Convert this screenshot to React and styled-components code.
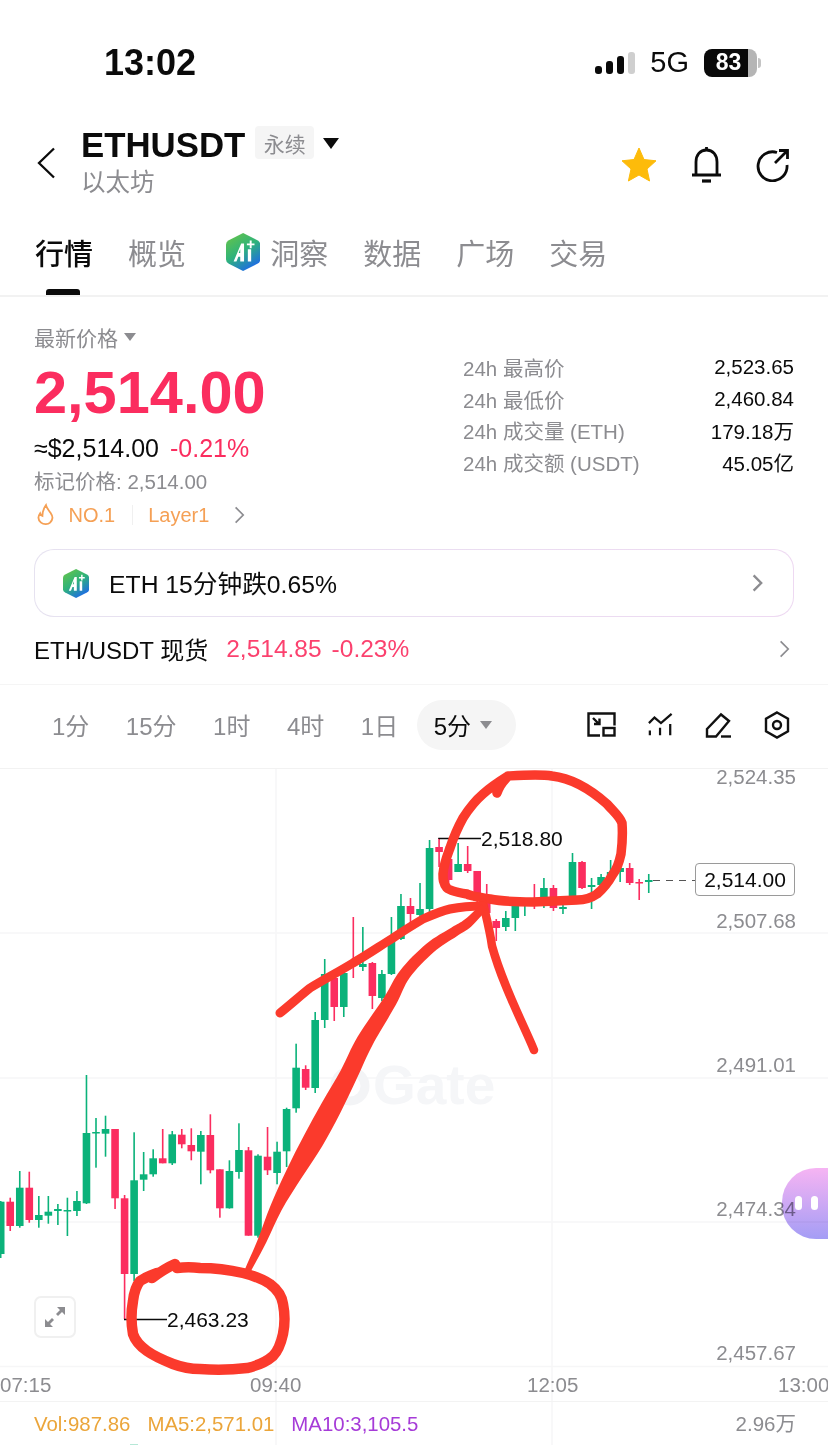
import React from "react";
import styled, { createGlobalStyle } from "styled-components";

const SANS = `"Liberation Sans", "Noto Sans CJK SC", sans-serif`;
const RED = "#fb2d5f";
const GREEN = "#0bb27a";
const GREY = "#8c8c90";
const INK_RED = "#fb3a2c";

const GlobalStyle = createGlobalStyle`
  html, body { margin: 0; padding: 0; background: #fff; }
  body { font-family: ${SANS}; color: #0b0b0b; }
  * { box-sizing: border-box; }
`;

const Page = styled.div`
  width: 828px;
  height: 1445px;
  overflow: hidden;
  position: relative;
  background: #fff;
`;

const StatusBar = styled.div`
  height: 125px;
  padding: 0 71px 0 104px;
  display: flex;
  justify-content: space-between;
  align-items: center;
`;

const Clock = styled.div`
  font-size: 36px;
  font-weight: 700;
`;

const StatusRight = styled.div`
  display: flex;
  align-items: center;
  gap: 15px;
`;

const Network = styled.span`
  font-size: 29px;
`;

const Battery = styled.div`
  width: 53px;
  height: 28px;
  border-radius: 8px;
  background: linear-gradient(90deg, #0a0a0a 83%, #b5b5b5 83%);
  color: #fff;
  font-size: 23px;
  font-weight: 700;
  display: flex;
  align-items: center;
  justify-content: center;
  padding-right: 4px;
  position: relative;
  &::after {
    content: "";
    position: absolute;
    right: -4px;
    top: 9px;
    width: 3px;
    height: 10px;
    border-radius: 0 3px 3px 0;
    background: #c4c4c4;
  }
`;

const Header = styled.div`
  height: 76px;
  padding: 0 38px 0 36px;
  display: flex;
  align-items: center;
`;

const TitleBlock = styled.div`
  margin-left: 25px;
  display: flex;
  flex-direction: column;
  flex: 1;
`;

const TitleRow = styled.div`
  display: flex;
  align-items: center;
  height: 38px;
`;

const Title = styled.span`
  font-size: 34.8px;
  font-weight: 700;
`;

const Tag = styled.span`
  margin: -5px 0 0 10px;
  width: 59px;
  height: 33px;
  border-radius: 4px;
  background: #f5f5f5;
  color: ${GREY};
  font-size: 21px;
  display: flex;
  align-items: center;
  justify-content: center;
`;

const Caret = styled.span`
  margin: -4px 0 0 9px;
  width: 0;
  height: 0;
  border-left: 8px solid transparent;
  border-right: 8px solid transparent;
  border-top: 11px solid #0b0b0b;
`;

const Subtitle = styled.span`
  font-size: 24.5px;
  line-height: 34px;
  margin-top: 2px;
  color: ${GREY};
`;

const HeaderActions = styled.div`
  display: flex;
  align-items: center;
  gap: 34px;
  margin-top: 4px;
`;

const Tabs = styled.div`
  height: 96px;
  padding: 0 0 0 35px;
  display: flex;
  align-items: center;
  gap: 35px;
  border-bottom: 2px solid #f2f2f2;
  position: relative;
`;

const Tab = styled.span`
  font-size: 29px;
  color: ${(p) => (p.$active ? "#0b0b0b" : GREY)};
  display: flex;
  align-items: center;
  gap: 10px;
  margin-top: 7px;
  margin-left: ${(p) => p.$shift || 0}px;
  font-weight: ${(p) => (p.$active ? 500 : 400)};
`;

const TabMarker = styled.span`
  position: absolute;
  left: 46px;
  bottom: 0;
  width: 34px;
  height: 6px;
  border-radius: 3px 3px 0 0;
  background: #0b0b0b;
`;

const Summary = styled.div`
  padding: 26px 34px 0;
  height: 252px;
  display: flex;
  justify-content: space-between;
`;

const PriceColumn = styled.div`
  display: flex;
  flex-direction: column;
`;

const PriceLabel = styled.div`
  font-size: 21px;
  color: ${GREY};
  display: flex;
  align-items: center;
  gap: 6px;
  height: 28px;
`;

const SmallCaret = styled.span`
  width: 0;
  height: 0;
  border-left: 6px solid transparent;
  border-right: 6px solid transparent;
  border-top: 8px solid ${GREY};
`;

const BigPrice = styled.div`
  font-size: 59.5px;
  font-weight: 700;
  color: ${RED};
  height: 72px;
  line-height: 66px;
  margin-top: 9px;
`;

const FiatRow = styled.div`
  display: flex;
  gap: 11px;
  font-size: 25px;
  height: 36px;
  align-items: center;
  margin-top: -2px;
`;

const Change = styled.span`
  color: ${RED};
`;

const MarkPrice = styled.div`
  font-size: 20.5px;
  color: ${GREY};
  height: 30px;
  display: flex;
  align-items: center;
  margin-top: -1px;
`;

const TagRow = styled.div`
  display: flex;
  align-items: center;
  font-size: 20px;
  color: #f5a055;
  height: 38px;
  gap: 8px;
  padding-left: 3px;
  margin-top: 1px;
`;

const TagDivider = styled.span`
  width: 1px;
  height: 20px;
  background: #f0f0f0;
  margin: 0 7px 0 9px;
`;

const TagArrow = styled.span`
  display: flex;
  margin-left: 17px;
`;

const StatsTable = styled.div`
  width: 331px;
  margin-top: 28px;
  display: flex;
  flex-direction: column;
`;

const StatRow = styled.div`
  height: 31.7px;
  display: flex;
  justify-content: space-between;
  align-items: center;
  font-size: 20.5px;
`;

const StatLabel = styled.span`
  color: ${GREY};
`;

const InsightCard = styled.div`
  margin: 0 34px;
  height: 68px;
  border-radius: 20px;
  padding: 0 30px 0 28px;
  display: flex;
  align-items: center;
  justify-content: space-between;
  border: 1.5px solid transparent;
  background:
    linear-gradient(#fff, #fff) padding-box,
    linear-gradient(90deg, #e6e2f0, #eed9f2) border-box;
`;

const InsightText = styled.div`
  display: flex;
  align-items: center;
  gap: 20px;
  font-size: 24.7px;
`;

const InsightLabel = styled.span`
  margin-bottom: 3px;
`;

const SpotRow = styled.div`
  height: 68px;
  padding: 0 38px 3px 34px;
  display: flex;
  align-items: center;
  font-size: 24px;
  border-bottom: 1px solid #f5f5f5;
`;

const SpotName = styled.span`
  margin: -2px 18px 0 0;
`;

const SpotChange = styled.span`
  color: ${RED};
  font-size: 24.5px;
  margin-right: 10px;
  opacity: 0.9;
`;

const Spacer = styled.span`
  flex: 1;
`;

const Toolbar = styled.div`
  height: 84px;
  padding: 0 38px 4px 52px;
  display: flex;
  align-items: center;
  border-bottom: 1px solid #f2f2f2;
`;

const Interval = styled.span`
  font-size: 24px;
  color: ${GREY};
  margin-right: 36.5px;
`;

const IntervalPill = styled.span`
  margin-left: -18px;
  width: 99px;
  height: 50px;
  border-radius: 25px;
  background: #f5f5f5;
  font-size: 24px;
  display: flex;
  align-items: center;
  padding-left: 17px;
  gap: 9px;
`;

const ToolIcons = styled.div`
  margin-left: auto;
  display: flex;
  align-items: center;
  gap: 32px;
`;

const ChartSection = styled.div`
  position: relative;
  height: 677px;
`;

const ChartLayer = styled.svg`
  position: absolute;
  inset: 0;
  width: 828px;
  height: 677px;
  overflow: visible;
  pointer-events: none;
`;

const Plot = styled.div`
  position: relative;
  height: 598px;
`;

const Watermark = styled.div`
  position: absolute;
  left: 373px;
  top: 282px;
  font-size: 55px;
  line-height: 68px;
  font-weight: 700;
  color: #f5f6f8;
`;

const YAxis = styled.div`
  position: absolute;
  top: -8px;
  right: 32px;
  display: grid;
  grid-auto-rows: 144px;
  text-align: right;
`;

const AxisLabel = styled.span`
  font-size: 20.5px;
  line-height: 32px;
  color: ${GREY};
`;

const ExtremeLabel = styled.span`
  position: absolute;
  left: ${(p) => p.$x}px;
  top: ${(p) => p.$y}px;
  font-size: 21px;
  line-height: 26px;
  color: #0b0b0b;
`;

const LastPrice = styled.span`
  position: absolute;
  left: 695px;
  top: 94px;
  width: 100px;
  height: 33px;
  border: 1px solid #9a9a9a;
  border-radius: 4px;
  font-size: 21px;
  background: #fff;
  display: flex;
  align-items: center;
  justify-content: center;
`;

const ExpandButton = styled.div`
  position: absolute;
  left: 34px;
  top: 527px;
  width: 42px;
  height: 42px;
  border: 2px solid #f0f0f0;
  border-radius: 7px;
  background: #fff;
  display: flex;
  align-items: center;
  justify-content: center;
`;

const Bubble = styled.div`
  position: absolute;
  right: 0;
  top: 399px;
  width: 46px;
  height: 71px;
  border-radius: 34px 0 0 34px;
  background: linear-gradient(180deg, #f6b4f3, #a49df5);
  mix-blend-mode: multiply;
  display: flex;
  gap: 9px;
  padding: 28px 0 0 13px;
`;

const BubbleEye = styled.span`
  width: 7px;
  height: 14px;
  border-radius: 3.5px;
  background: #fff;
`;

const TimeAxis = styled.div`
  height: 35px;
  display: grid;
  grid-template-columns: 250px 277px 251px 50px;
  align-items: center;
  padding-top: 2px;
  border-bottom: 1px solid #f3f3f3;
  position: relative;
  white-space: nowrap;
`;

const Legend = styled.div`
  height: 44px;
  padding: 0 32px 0 34px;
  display: flex;
  align-items: center;
  font-size: 20.4px;
  position: relative;
`;

const LegendItem = styled.span`
  color: ${(p) => p.$color};
  margin-right: 17px;
`;

const candles = [
  [1200, 1200.7, 1253, 1257, "g"], [1196.7, 1200.7, 1225, 1230, "r"], [1170, 1186.7, 1225, 1226.7, "g"],
  [1170.7, 1186.7, 1219, 1221.7, "r"], [1195, 1214, 1219, 1226.7, "g"], [1195, 1210.7, 1214.7, 1222.7, "g"],
  [1203, 1208, 1210, 1224, "g"], [1196.7, 1209, 1210, 1235, "g"], [1190, 1200, 1210, 1215, "g"],
  [1074, 1132, 1202.3, 1203, "g"], [1117, 1131, 1132, 1166.7, "g"], [1114.7, 1128, 1132.7, 1155.7, "g"],
  [1128, 1128, 1197.3, 1208, "r"], [1194, 1197.3, 1273, 1318, "r"], [1131.3, 1179.3, 1273, 1280, "g"],
  [1151, 1173.3, 1178.7, 1190, "g"], [1148.3, 1157.3, 1173.3, 1175.7, "g"], [1128, 1157.3, 1162.3, 1162.3, "r"],
  [1130, 1133.3, 1162.3, 1164, "g"], [1128, 1133.7, 1143.3, 1147.3, "r"], [1127.3, 1144, 1150.3, 1159.3, "r"],
  [1130, 1134, 1150.7, 1183.3, "g"], [1113.3, 1134, 1169.3, 1172.3, "r"], [1168.3, 1168.3, 1207.3, 1216.7, "r"],
  [1159.3, 1170, 1207.3, 1207.6, "g"], [1122.3, 1149, 1171, 1177.7, "g"], [1146, 1149.3, 1234.7, 1234.7, "r"],
  [1153.3, 1154.7, 1234.7, 1236.7, "g"], [1126, 1155.7, 1169.3, 1174, "r"], [1140.7, 1150.7, 1172, 1183.3, "g"],
  [1106.7, 1108, 1150.3, 1166, "g"], [1042.7, 1066.7, 1107.3, 1111.7, "g"], [1064.3, 1068, 1086.7, 1089, "r"],
  [1011, 1019, 1087, 1092, "g"], [958, 973, 1019, 1027, "g"], [973, 977, 1006, 1020, "r"],
  [967, 972, 1006, 1016, "g"], [916, 960, 962, 977, "r"], [926, 963, 966, 970, "g"],
  [961, 962, 995, 1008, "r"], [969, 973, 997, 1000, "g"], [916, 937, 973, 974, "g"],
  [893, 905, 938, 939, "g"], [897, 905, 913, 922, "r"], [882, 908, 914, 917, "g"],
  [839, 847, 908, 912, "g"], [837, 846, 851, 866, "r"], [845, 858, 879, 885, "r"],
  [842, 863, 871, 871, "g"], [845, 863, 870, 872, "r"], [870, 870, 900, 902, "r"],
  [883, 895, 912, 916, "r"], [918, 920, 927, 940, "r"], [910, 917, 926, 930, "g"],
  [900, 905, 917, 930, "g"], [897, 900, 905, 915, "g"], [883, 899, 902, 908, "r"],
  [877, 887, 897, 907, "g"], [884, 887, 907, 910, "r"], [896, 906, 908, 913, "g"],
  [852, 861, 896, 897, "g"], [860, 861, 887, 888, "r"], [877, 884, 886, 908, "g"],
  [873, 876, 884, 887, "g"], [859, 871, 875, 876, "g"], [865, 867, 871, 881, "g"],
  [862, 867, 882, 884, "r"], [878, 881, 882, 899, "r"], [873, 879, 881, 892, "g"],
];

const yLabels = ["2,524.35", "2,507.68", "2,491.01", "2,474.34", "2,457.67"];
const timeLabels = ["07:15", "09:40", "12:05", "13:00"];
const intervals = ["1分", "15分", "1时", "4时", "1日"];
const stats = [
  ["24h 最高价", "2,523.65"],
  ["24h 最低价", "2,460.84"],
  ["24h 成交量 (ETH)", "179.18万"],
  ["24h 成交额 (USDT)", "45.05亿"],
];

// centre line of the long pen stroke with its width at each point
const penStroke = [
  [484, 906, 8], [468, 922, 9.5], [454, 931, 10], [430, 947, 11], [405, 973, 12], [390, 1000, 14], [365, 1040, 17],
  [349, 1073, 18], [331, 1107, 21], [313, 1140, 21], [294, 1173, 17], [276, 1207, 12], [262, 1240, 9], [247, 1271, 6],
];

function smoothThrough(points, start) {
  let d = start ? `M${points[0][0]} ${points[0][1]}` : `L${points[0][0]} ${points[0][1]}`;
  for (let i = 0; i < points.length - 1; i++) {
    const [x0, y0] = points[Math.max(i - 1, 0)];
    const [x1, y1] = points[i];
    const [x2, y2] = points[i + 1];
    const [x3, y3] = points[Math.min(i + 2, points.length - 1)];
    d += `C${x1 + (x2 - x0) / 6} ${y1 + (y2 - y0) / 6} ${x2 - (x3 - x1) / 6} ${y2 - (y3 - y1) / 6} ${x2} ${y2}`;
  }
  return d;
}

function penOutline(line) {
  const left = [];
  const right = [];
  line.forEach(([x, y, w], i) => {
    const [ax, ay] = line[Math.max(i - 1, 0)];
    const [bx, by] = line[Math.min(i + 1, line.length - 1)];
    const len = Math.hypot(bx - ax, by - ay);
    const nx = ((by - ay) / len) * (w / 2);
    const ny = (-(bx - ax) / len) * (w / 2);
    left.push([x + nx, y + ny]);
    right.push([x - nx, y - ny]);
  });
  return `${smoothThrough(left, true)}${smoothThrough(right.reverse(), false)}Z`;
}

function Chevron({ size = 16, color = "#8c8c90", width = 2 }) {
  return (
    <svg width={size * 0.6} height={size} viewBox="0 0 10 16" fill="none" stroke={color} strokeWidth={width}>
      <path d="M1.5 1l7 7-7 7" />
    </svg>
  );
}

function AiLogo({ size = 36, id }) {
  return (
    <svg width={size * 0.9} height={size} viewBox="0 0 36 40">
      <defs>
        <linearGradient id={id} x1="0" y1="0" x2="0.6" y2="1">
          <stop offset="0" stopColor="#6cc644" />
          <stop offset="0.55" stopColor="#2fb37a" />
          <stop offset="1" stopColor="#1f6fe0" />
        </linearGradient>
      </defs>
      <path d="M18 0l15 7.5q3 1.5 3 4.5v16q0 3-3 4.5L18 40 3 32.5Q0 31 0 28V12q0-3 3-4.5z" fill={`url(#${id})`} />
      <path d="M8 30l8-19h3v19h-4v-5h-2l-2 5z M15 21v-4l-1.6 4z" fill="#fff" fillRule="evenodd" />
      <path d="M23 17h3.5v13H23z M25 8v3h-3v2h3v3h2v-3h3v-2h-3V8z" fill="#fff" />
    </svg>
  );
}

function Candles() {
  return candles.map(([high, top, bottom, low, side], i) => {
    const x = 0.7 + i * 9.53;
    const fill = side === "g" ? GREEN : RED;
    return (
      <g key={i} fill={fill}>
        <rect x={x - 0.8} y={high} width={1.6} height={low - high} />
        <rect x={x - 3.8} y={top} width={7.6} height={Math.max(bottom - top, 1.5)} />
      </g>
    );
  });
}

// hand drawn marks on top of the chart, in page coordinates
function Scribbles() {
  return (
    <ChartLayer viewBox="0 768 828 677">
      <g fill="none" stroke={INK_RED} strokeLinecap="round" strokeLinejoin="round">
        <path
          strokeWidth="9.5"
          d="M497 792C500 782 506 778 508 775C525 774 540 773 552 775C570 777 590 788 607 803C615 812 620 816 622 822C623 835 622 845 621 853C619 862 617 868 613 873C608 882 603 888 597 893C590 898 584 899 577 899L533 901C515 901 500 900 490 898C478 896 470 895 467 893C455 891 448 889 447 887C443 882 443 878 443 873C444 862 447 855 450 847C454 835 458 826 463 817C470 806 476 799 483 793C492 785 500 780 508 775"
        />
        <path strokeWidth="8.5" d="M483 902C486 915 490 930 492 945C503 985 522 1020 534 1049" />
        <path
          strokeWidth="9"
          d="M280 1012C290 1004 300 995 310 987C325 978 340 970 353 962C367 954 380 945 393 937C403 930 413 924 423 918C432 914 441 910 450 908C460 906 472 905 483 905"
        />
        <path
          strokeWidth="10.5"
          d="M152 1277C160 1271 168 1266 175 1263M177 1267C185 1266 192 1266 200 1267C215 1267 230 1269 243 1272C255 1275 264 1279 270 1283C278 1289 282 1296 283 1303C285 1313 285 1323 283 1333C281 1342 278 1350 273 1355C265 1362 256 1365 247 1367C230 1369 215 1369 200 1368C190 1368 181 1366 173 1363C163 1359 154 1355 147 1350C140 1345 135 1339 133 1333C131 1322 131 1311 133 1300C134 1291 136 1285 140 1280C146 1276 151 1274 157 1272"
        />
      </g>
      <path fill={INK_RED} d={penOutline(penStroke)} />
    </ChartLayer>
  );
}

export default function App() {
  return (
    <Page>
      <GlobalStyle />
      <StatusBar>
        <Clock>13:02</Clock>
        <StatusRight>
          <svg width="40" height="22" viewBox="0 0 40 22">
            <rect x="0" y="14" width="7" height="8" rx="3" fill="#0a0a0a" />
            <rect x="11" y="9" width="7" height="13" rx="3" fill="#0a0a0a" />
            <rect x="22" y="4" width="7" height="18" rx="3" fill="#0a0a0a" />
            <rect x="33" y="0" width="7" height="22" rx="3" fill="#cfcfcf" />
          </svg>
          <Network>5G</Network>
          <Battery>83</Battery>
        </StatusRight>
      </StatusBar>

      <Header>
        <svg width="20" height="32" viewBox="0 0 20 32" fill="none" stroke="#0b0b0b" strokeWidth="2.3">
          <path d="M18 1.5L3 16l15 14.5" />
        </svg>
        <TitleBlock>
          <TitleRow>
            <Title>ETHUSDT</Title>
            <Tag>永续</Tag>
            <Caret />
          </TitleRow>
          <Subtitle>以太坊</Subtitle>
        </TitleBlock>
        <HeaderActions>
          <svg width="36" height="36" viewBox="0 0 36 36">
            <path
              d="M18 1l5 11.5 12 1.3-9 8.2 2.6 12L18 28l-10.600 6 2.600-12-9-8.200 12-1.300z"
              fill="#fdbb0a"
              stroke="#fdbb0a"
              strokeLinejoin="round"
            />
          </svg>
          <svg width="31" height="38" viewBox="0 0 31 38" fill="none" stroke="#0b0b0b" strokeWidth="2.800">
            <path d="M1 29h29M5 29V16C5 9 9 4 15.500 4S26 9 26 16v13" />
            <path d="M15.500 1v3" />
            <path d="M11 35h9" strokeWidth="3.200" />
          </svg>
          <svg width="34" height="34" viewBox="0 0 34 34" fill="none" stroke="#0b0b0b" strokeWidth="2.800">
            <path d="M21 4.500A14.500 14.500 0 1 0 31 17" />
            <path d="M19 15L31 3M23 2.500h8.500V11" />
          </svg>
        </HeaderActions>
      </Header>

      <Tabs>
        <Tab $active>行情</Tab>
        <Tab>概览</Tab>
        <Tab $shift={5}>
          <AiLogo id="ai-tab" size={38} />
          洞察
        </Tab>
        <Tab>数据</Tab>
        <Tab>广场</Tab>
        <Tab>交易</Tab>
        <TabMarker />
      </Tabs>

      <Summary>
        <PriceColumn>
          <PriceLabel>
            最新价格
            <SmallCaret />
          </PriceLabel>
          <BigPrice>2,514.00</BigPrice>
          <FiatRow>
            <span>≈$2,514.00</span>
            <Change>-0.21%</Change>
          </FiatRow>
          <MarkPrice>标记价格: 2,514.00</MarkPrice>
          <TagRow>
            <svg width="18" height="24" viewBox="0 0 20 25" fill="none" stroke="#f5a055" strokeWidth="2">
              <path d="M10 1.500c1 4 3 5.500 5 8.500 3 4.500 3 7-.5 11-2 2-7 2.500-10 0C1 18 1 14 3.500 10.500c.5 1.500 1 2.500 2.500 3C6 9 7.500 5 10 1.500z" />
            </svg>
            <span>&nbsp;NO.1</span>
            <TagDivider />
            <span>Layer1</span>
            <TagArrow>
              <Chevron size={18} width={1.6} />
            </TagArrow>
          </TagRow>
        </PriceColumn>
        <StatsTable>
          {stats.map(([label, value]) => (
            <StatRow key={label}>
              <StatLabel>{label}</StatLabel>
              <span>{value}</span>
            </StatRow>
          ))}
        </StatsTable>
      </Summary>

      <InsightCard>
        <InsightText>
          <AiLogo id="ai-card" size={29} />
          <InsightLabel>ETH 15分钟跌0.65%</InsightLabel>
        </InsightText>
        <Chevron size={18} width={2.200} />
      </InsightCard>

      <SpotRow>
        <SpotName>ETH/USDT 现货</SpotName>
        <SpotChange>2,514.85</SpotChange>
        <SpotChange>-0.23%</SpotChange>
        <Spacer />
        <Chevron size={18} width={1.6} />
      </SpotRow>

      <Toolbar>
        {intervals.map((item) => (
          <Interval key={item}>{item}</Interval>
        ))}
        <IntervalPill>
          5分
          <SmallCaret />
        </IntervalPill>
        <ToolIcons>
          <svg width="29" height="25" viewBox="0 0 29 25" fill="none" stroke="#111" strokeWidth="2.400">
            <path d="M13 23.500H1.500v-22h26v12" />
            <path d="M6 6l6 6M7 12h5.500V6.500" />
            <rect x="16.500" y="16" width="11" height="7.500" />
          </svg>
          <svg width="25" height="25" viewBox="0 0 27 25" fill="none" stroke="#111" strokeWidth="2.400">
            <path d="M1 11l6-6 7 6L25.500 1" />
            <path d="M2 19v5M13 16v8M24 12v12" />
          </svg>
          <svg width="27" height="26" viewBox="0 0 27 26" fill="none" stroke="#111" strokeWidth="2.400">
            <path d="M2 17L16 2.500l8 6.500L11 24.500H2z" />
            <path d="M16 24.500h10" />
          </svg>
          <svg width="26" height="28" viewBox="0 0 26 28" fill="none" stroke="#111" strokeWidth="2.400">
            <path d="M13 1.500l11 6.200v12.600l-11 6.200-11-6.200V7.700z" />
            <circle cx="13" cy="14" r="4" />
          </svg>
        </ToolIcons>
      </Toolbar>

      <ChartSection>
        <ChartLayer viewBox="0 768 828 677">
          <g stroke="#f6f6f7" strokeWidth="1.500">
            <path d="M276 768V1445M552 768V1445" />
            <path d="M0 932H828M0 1077H828M0 1221H828M0 1365.500H828" />
          </g>
          <circle cx="350" cy="1085" r="15" fill="none" stroke="#f3f4f6" strokeWidth="9" />
          <Candles />
          <g stroke="#0b0b0b" strokeWidth="1.500" fill="none">
            <path d="M439 838V837.500H481" />
            <path d="M124 1318.500H167" />
          </g>
          <path d="M653 879.500H695" stroke="#555" strokeWidth="1.200" strokeDasharray="7 6" />
          <rect x="130" y="1443.500" width="8" height="2" fill={GREEN} opacity="0.6" />
        </ChartLayer>

        <Plot>
          <Watermark>Gate</Watermark>
          <YAxis>
            {yLabels.map((label) => (
              <AxisLabel key={label}>{label}</AxisLabel>
            ))}
          </YAxis>
          <ExtremeLabel $x={481} $y={57}>2,518.80</ExtremeLabel>
          <ExtremeLabel $x={167} $y={538}>2,463.23</ExtremeLabel>
          <LastPrice>2,514.00</LastPrice>
          <ExpandButton>
            <svg width="22" height="22" viewBox="0 0 22 22" fill="#8c8c90">
              <path d="M13 1h8v8l-3-3-4 4-2-2 4-4zM9 21H1v-8l3 3 4-4 2 2-4 4z" />
            </svg>
          </ExpandButton>
        </Plot>
        <TimeAxis>
          {timeLabels.map((label) => (
            <AxisLabel key={label}>{label}</AxisLabel>
          ))}
        </TimeAxis>
        <Legend>
          <LegendItem $color="#eba53a">Vol:987.86</LegendItem>
          <LegendItem $color="#eba53a">MA5:2,571.01</LegendItem>
          <LegendItem $color="#a63bd8">MA10:3,105.5</LegendItem>
          <Spacer />
          <AxisLabel>2.96万</AxisLabel>
        </Legend>
        <Scribbles />
        <Bubble>
          <BubbleEye />
          <BubbleEye />
        </Bubble>
      </ChartSection>
    </Page>
  );
}
